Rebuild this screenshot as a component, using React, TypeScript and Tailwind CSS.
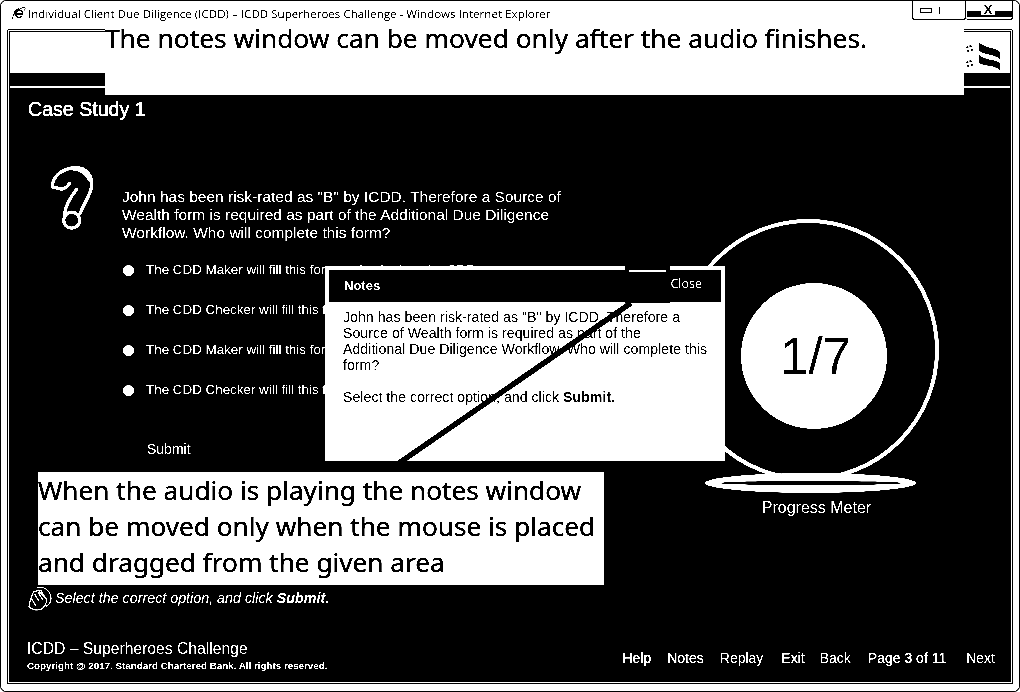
import React from "react";

const QuestionIcon = () => (
  <svg viewBox="90 40 135 200" width="45" height="67" fill="none" stroke="white" strokeWidth="10" strokeLinecap="round" strokeLinejoin="round">
    <path d="M97 108C97 85 115 55 165 50C200 50 217 75 215 105C213 130 195 150 180 188" />
    <path d="M97 108L125 115Q140 112 148 98" />
    <path d="M133 192C136 165 150 140 170 115" />
    <circle cx="155" cy="208" r="24" />
    <path d="M160 52C180 54 200 64 210 85" strokeWidth="14" />
  </svg>
);

const HandIcon = () => (
  <svg viewBox="80 48 72 74" width="24" height="25" fill="none" stroke="white" strokeWidth="3.5" strokeLinecap="round" strokeLinejoin="round">
    <path d="M108 52C130 48 148 62 149 85C149 95 144 103 135 108" />
    <path d="M96 66C90 80 84 95 83 110C92 120 112 122 122 116C132 108 136 96 136 86L118 70L112 60Z" />
    <path d="M100 72L112 92M110 66L124 88M118 60L132 84" />
    <path d="M92 88L104 108" />
  </svg>
);

const IeIcon = () => (
  <svg viewBox="0 0 16 16" width="15" height="15" fill="none" stroke="black">
    <path d="M12.5 8.5H5.2C5.2 5 8 4 10 4.6C12 5.3 12.6 7 12.5 8.5ZM5.2 9.5C5.4 12.4 9 13.4 11.8 11" strokeWidth="1.5" />
    <path d="M2 14.5C0.5 11 6 3.5 13 1.5C15.5 1 15.6 3 14 5" strokeWidth="1" />
    <path d="M3.2 9C2.8 6 5.4 3 8.4 3" strokeWidth="1.2" />
  </svg>
);

const LogoIcon = () => (
  <svg viewBox="530 120 80 95" width="27" height="32" fill="black">
    <path d="M538 127C556 146 590 142 602 156L602 178C584 160 552 166 538 150Z" />
    <path d="M538 163C556 182 590 176 602 190L602 210C584 192 552 200 538 186Z" />
  </svg>
);

const Option = ({ text }: { text: string }) => (
  <div className="flex items-center h-[18px]">
    <span className="w-[11px] h-[11px] rounded-full bg-white" />
    <span className="ml-[12px] text-[13.4px] whitespace-nowrap">{text}</span>
  </div>
);

export default function App() {
  return (
    <div
      className="relative w-[1020px] h-[692px] overflow-hidden bg-white border border-black rounded-[6px] box-border text-black contrast-[8]"
      style={{ fontFamily: '"Liberation Sans", Arial, sans-serif' }}
    >
      {/* title bar */}
      <div className="flex items-start justify-between h-[28px] pl-[10px] pr-[6px]">
        <div className="flex items-center h-[25px] gap-[2px] text-[11.6px] leading-[14px] whitespace-nowrap" style={{ fontFamily: '"Open Sans", sans-serif' }}>
          <IeIcon />
          <span>Individual Client Due Diligence (ICDD) – ICDD Superheroes Challenge - Windows Internet Explorer</span>
        </div>
        <div className="flex h-[19px]">
          <div className="w-[54px] border border-t-0 border-black rounded-b-[3px] flex items-center pl-[7px] gap-[7px]">
            <span className="w-[12px] h-[5px] border border-black" />
            <span className="w-px h-[7px] bg-black" />
          </div>
          <div className="w-[47px] border-r border-b border-black rounded-b-[3px] flex flex-col justify-end pb-[2px] pl-[1px] relative">
            <div className="h-[6px] bg-black" />
            <span className="absolute left-[15px] top-[3px] w-[14px] h-[11px] text-[13px] font-bold leading-[11px] text-center bg-white">X</span>
          </div>
        </div>
      </div>

      {/* browser frame */}
      <div className="ml-[6px] mr-[6px] h-[655px] border border-black rounded-t-[2px] p-px">
        <div className="h-full border border-black flex flex-col">
          <div className="h-[41px] bg-white flex items-end justify-end pr-[7px] gap-[3px] shrink-0 pb-[1px]">
            <div className="flex flex-col gap-[8px] pb-[5px]">
              <span className="w-[7px] h-[7px] rounded-full border-2 border-dotted border-black" />
              <span className="w-[7px] h-[7px] rounded-full border-2 border-dotted border-black" />
            </div>
            <LogoIcon />
          </div>
          <div className="h-[13px] bg-black shrink-0" />
          <div className="h-[2px] bg-white shrink-0" />

          {/* main stage */}
          <div className="flex-1 bg-black text-white flex flex-col min-h-0">
            <div className="flex flex-1 min-h-0">
              <div className="w-[667px] shrink-0 flex flex-col">
                <h1 className="ml-[18px] mt-[10px] h-[22px] text-[19.6px] leading-[22px] font-normal [-webkit-text-stroke:0.3px_white]">Case Study 1</h1>
                <div className="flex items-start mt-[45px]">
                  <div className="ml-[40px] w-[45px] shrink-0 -mt-[1px]"><QuestionIcon /></div>
                  <p className="ml-[27px] mt-[23px] w-[450px] text-[15.5px] leading-[18px]">
                    John has been risk-rated as "B" by ICDD. Therefore a Source of Wealth form is required as part of the Additional Due Diligence Workflow. Who will complete this form?
                  </p>
                </div>
                <div className="ml-[113px] mt-[19px] flex flex-col gap-[22px]">
                  <Option text="The CDD Maker will fill this form and submit to the CDD" />
                  <Option text="The CDD Checker will fill this form" />
                  <Option text="The CDD Maker will fill this form" />
                  <Option text="The CDD Checker will fill this form" />
                </div>
                <div className="ml-[137px] mt-[41px] text-[14px] leading-[18px]">Submit</div>
              </div>

              {/* progress meter */}
              <div className="mt-[131px] flex flex-col items-start">
                <div className="w-[262px] h-[262px] rounded-full border-[4px] border-white pl-[60px] pt-[60px]">
                  <div className="w-[146px] h-[146px] rounded-full bg-white text-black flex items-center justify-center text-[51px] leading-none pl-[3px]">1/7</div>
                </div>
                <div className="relative -mt-[8px] ml-[28px] w-[211px] h-[20px] rounded-[50%] bg-white flex items-center justify-center">
                  <span className="w-[182px] h-[4px] bg-black rounded-[50%]" />
                </div>
                <div className="ml-[34px] w-[211px] mt-[6px] text-center text-[16px] leading-[18px]">Progress Meter</div>
              </div>
            </div>

            {/* instruction & footer */}
            <div className="flex items-center ml-[18px] h-[25px] gap-[3px] -mt-[1px]">
              <HandIcon />
              <p className="text-[14.3px] italic">Select the correct option, and click <b>Submit.</b></p>
            </div>
            <div className="flex items-end justify-between mt-[29px] pl-[17px] pr-[15px] pb-[9px]">
              <div>
                <div className="text-[15.7px] leading-[18px]">ICDD – Superheroes Challenge</div>
                <div className="text-[9.8px] leading-[12px] mt-[2px] font-bold">Copyright @ 2017. Standard Chartered Bank. All rights reserved.</div>
              </div>
              <nav className="flex items-center text-[14px] leading-[18px] pb-[5px]">
                <span className="[-webkit-text-stroke:0.2px_white]">Help</span>
                <span className="ml-[16px] [-webkit-text-stroke:0.2px_white]">Notes</span>
                <span className="ml-[16px]">Replay</span>
                <span className="ml-[18px] [-webkit-text-stroke:0.2px_white]">Exit</span>
                <span className="ml-[15px]">Back</span>
                <span className="ml-[17px] [-webkit-text-stroke:0.2px_white]">Page 3 of 11</span>
                <span className="ml-[20px]">Next</span>
              </nav>
            </div>
          </div>
        </div>
      </div>

      {/* notes window */}
      <div className="absolute left-[324px] top-[265px] w-[400px] h-[195px] bg-white p-[4px] pb-0">
        <div className="h-[32px] bg-black text-white flex items-center justify-between pl-[15px] pr-[19px]">
          <span className="text-[13px] font-bold">Notes</span>
          <span className="text-[12.5px] -mt-[4px]" style={{ fontFamily: '"Open Sans", sans-serif' }}>Close</span>
        </div>
        <div className="pl-[14px] pr-[12px] pt-[7px] text-[14.2px] leading-[16px] text-black whitespace-nowrap">
          <p>
            John has been risk-rated as "B" by ICDD. Therefore a<br />
            Source of Wealth form is required as part of the<br />
            Additional Due Diligence Workflow. Who will complete this<br />
            form?
          </p>
          <p className="mt-[16px]">Select the correct option, and click <b>Submit.</b></p>
        </div>
      </div>

      {/* drag handle highlight */}
      <div className="absolute left-[624px] top-[265px] w-[45px] h-[37px] bg-black">
        <div className="mt-[4px] ml-[4px] w-[37px] h-[2px] bg-white" />
      </div>

      {/* pointer line */}
      <svg className="absolute left-0 top-0 pointer-events-none" width="1020" height="692">
        <line x1="385" y1="471" x2="630" y2="302" stroke="black" strokeWidth="5.5" />
      </svg>

      {/* callouts */}
      <div
        className="absolute left-[104px] top-[25px] w-[859px] h-[69px] bg-white text-black text-[26.3px] leading-[24px] whitespace-nowrap [-webkit-text-stroke:0.3px_black]"
        style={{ fontFamily: '"Noto Sans", sans-serif' }}
      >
        The notes window can be moved only after the audio finishes.
      </div>
      <div
        className="absolute left-[37px] top-[471px] w-[566px] h-[113px] bg-white text-black text-[26.2px] leading-[36px] [-webkit-text-stroke:0.3px_black]"
        style={{ fontFamily: '"Noto Sans", sans-serif' }}
      >
        When the audio is playing the notes window can be moved only when the mouse is placed and dragged from the given area
      </div>
    </div>
  );
}
